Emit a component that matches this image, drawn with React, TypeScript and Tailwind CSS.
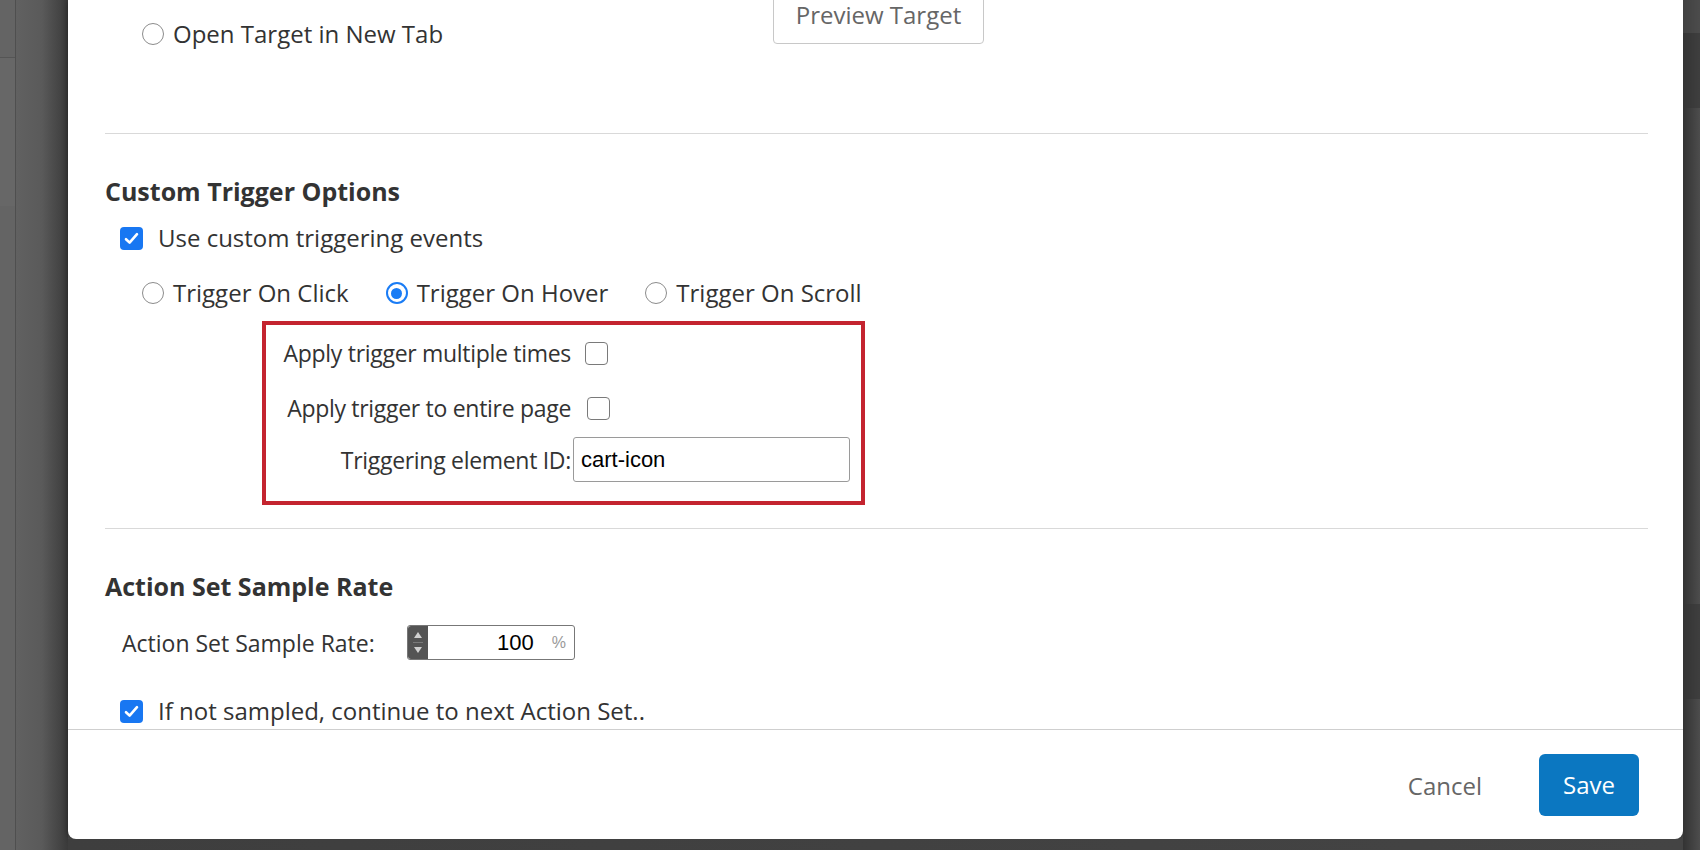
import React from "react";

const font = "font-['Open_Sans','Noto_Sans',sans-serif]";

const Radio = ({ checked = false }: { checked?: boolean }) =>
  checked ? (
    <span className="flex h-[22px] w-[22px] shrink-0 items-center justify-center rounded-full border-[2px] border-[#1a7cf5] bg-white">
      <span className="block h-[11px] w-[11px] rounded-full bg-[#1a7cf5]" />
    </span>
  ) : (
    <span className="block h-[22px] w-[22px] shrink-0 rounded-full border border-[#8c8c8c] bg-white" />
  );

const Checkbox = ({ checked = false }: { checked?: boolean }) =>
  checked ? (
    <span className="flex h-[23px] w-[23px] shrink-0 items-center justify-center rounded-[4px] bg-[#1877f2]">
      <svg width="15" height="13" viewBox="0 0 15 13" fill="none">
        <path d="M2 7.2 L5.6 10.6 L13 2.2" stroke="white" strokeWidth="2.6" strokeLinecap="round" strokeLinejoin="round" />
      </svg>
    </span>
  ) : (
    <span className="block h-[23px] w-[23px] shrink-0 rounded-[4px] border border-[#7a7a7a] bg-white" />
  );

const Divider = () => <div className="h-px w-full bg-[#d9d9d9]" />;

const Spinner = () => (
  <div className="flex h-full w-[20px] flex-col items-center justify-between rounded-l-[3px] bg-[#545454] py-[6px]">
    <svg width="8" height="6" viewBox="0 0 8 6">
      <path d="M4 0 L8 6 L0 6 Z" fill="#d0d0d0" />
    </svg>
    <div className="h-px w-[10px] bg-[#7a7a7a]" />
    <svg width="8" height="6" viewBox="0 0 8 6">
      <path d="M0 0 L8 0 L4 6 Z" fill="#d0d0d0" />
    </svg>
  </div>
);

export default function App() {
  return (
    <div className={`flex h-[850px] w-full overflow-hidden bg-[#4a4a4a] ${font}`}>
      {/* left backdrop */}
      <div className="flex h-full w-[68px] shrink-0">
        <div className="flex h-full w-[16px] flex-col border-r border-[#4f4f4f] bg-[#646464]">
          <div className="h-[58px] border-b border-[#555]" />
          <div className="h-[148px] bg-[#676767]" />
        </div>
        <div className="h-full flex-1 bg-linear-to-r from-[#616161] via-[#5a5a5a] to-[#3a3a3a]" />
      </div>

      {/* modal column */}
      <div className="flex h-full w-[1615px] shrink-0 flex-col">
        <div className="flex h-[839px] flex-col overflow-hidden rounded-b-[8px] bg-white text-[#333] shadow-[0_0_6px_rgba(0,0,0,0.45)]">
          <div className="flex-1 overflow-hidden pl-[37px] pr-[35px]">
            {/* target options */}
            <div className="flex h-[133px] items-start">
              <label className="flex w-[668px] items-center gap-[9px] pl-[37px] pt-[20px] text-[24px] leading-[28px]">
                <Radio />
                <span>Open Target in New Tab</span>
              </label>
              <button className="-mt-[16px] h-[60px] w-[211px] rounded-[4px] border border-[#c8c8c8] bg-white pt-[2px] text-[24px] leading-[24px] text-[#666]">
                Preview Target
              </button>
            </div>
            <Divider />

            {/* custom trigger options */}
            <h2 className="mt-[42px] text-[25px] font-bold leading-[30px] text-[#333]">Custom Trigger Options</h2>
            <label className="mt-[14px] flex items-center gap-[15px] pl-[15px] text-[24px] leading-[36px]">
              <Checkbox checked />
              <span>Use custom triggering events</span>
            </label>
            <div className="mt-[22px] flex items-center pl-[37px] text-[24px] leading-[30px]">
              <label className="flex items-center gap-[9px]">
                <Radio />
                <span>Trigger On Click</span>
              </label>
              <label className="ml-[37px] flex items-center gap-[9px]">
                <Radio checked />
                <span>Trigger On Hover</span>
              </label>
              <label className="ml-[37px] flex items-center gap-[9px]">
                <Radio />
                <span>Trigger On Scroll</span>
              </label>
            </div>

            <div className="ml-[157px] mt-[13px] flex h-[184px] w-[603px] flex-col border-[4px] border-[#c4242f] pt-[10px] text-[23px] leading-[30px] tracking-[-0.3px]">
              <div className="flex h-[36px] items-center">
                <span className="w-[305px] text-right">Apply trigger multiple times</span>
                <span className="ml-[14px]"><Checkbox /></span>
              </div>
              <div className="mt-[19px] flex h-[36px] items-center">
                <span className="w-[305px] text-right">Apply trigger to entire page</span>
                <span className="ml-[16px]"><Checkbox /></span>
              </div>
              <div className="mt-[11px] flex items-center">
                <span className="w-[305px] text-right">Triggering element ID:</span>
                <input
                  readOnly
                  value="cart-icon"
                  className="ml-[2px] h-[45px] w-[277px] rounded-[3px] border border-[#9a9a9a] px-[7px] font-['Liberation_Sans',Arial,sans-serif] text-[22px] tracking-normal text-black outline-none"
                />
              </div>
            </div>

            <div className="mt-[23px]">
              <Divider />
            </div>

            {/* sample rate */}
            <h2 className="mt-[42px] text-[25px] font-bold leading-[30px] text-[#333]">Action Set Sample Rate</h2>
            <div className="mt-[24px] flex items-center pl-[17px] text-[23px] leading-[30px]">
              <span className="w-[285px]">Action Set Sample Rate:</span>
              <div className="flex h-[35px] w-[168px] items-stretch rounded-[3px] border border-[#777]">
                <Spinner />
                <div className="flex flex-1 items-center justify-end gap-[18px] pr-[8px]">
                  <span className="font-['Liberation_Sans',Arial,sans-serif] text-[22px] text-black">100</span>
                  <span className="font-['Liberation_Sans',Arial,sans-serif] text-[16px] text-[#999]">%</span>
                </div>
              </div>
            </div>
            <label className="mt-[36px] flex items-center gap-[15px] pl-[15px] text-[24px] leading-[30px]">
              <Checkbox checked />
              <span>If not sampled, continue to next Action Set..</span>
            </label>
          </div>

          {/* footer */}
          <div className="flex h-[110px] shrink-0 items-start justify-end border-t border-[#cfcfcf] pr-[44px] pt-[24px]">
            <button className="mr-[57px] mt-[14px] h-[36px] text-[24px] text-[#666]">Cancel</button>
            <button className="h-[62px] w-[100px] rounded-[6px] bg-[#0b77c1] text-[24px] text-white">Save</button>
          </div>
        </div>
        <div className="flex-1 bg-linear-to-r from-[#3e3e3e] to-[#444]" />
      </div>

      {/* right backdrop */}
      <div className="flex h-full flex-1 flex-col bg-linear-to-r from-[#333] to-[#4d4d4d]">
        <div className="h-[33px] bg-[#4b4b4b]/60" />
        <div className="h-[75px] bg-[#353535]/60" />
        <div className="h-[496px]" />
        <div className="h-[95px] bg-[#353535]/60" />
        <div className="flex-1" />
      </div>
    </div>
  );
}
